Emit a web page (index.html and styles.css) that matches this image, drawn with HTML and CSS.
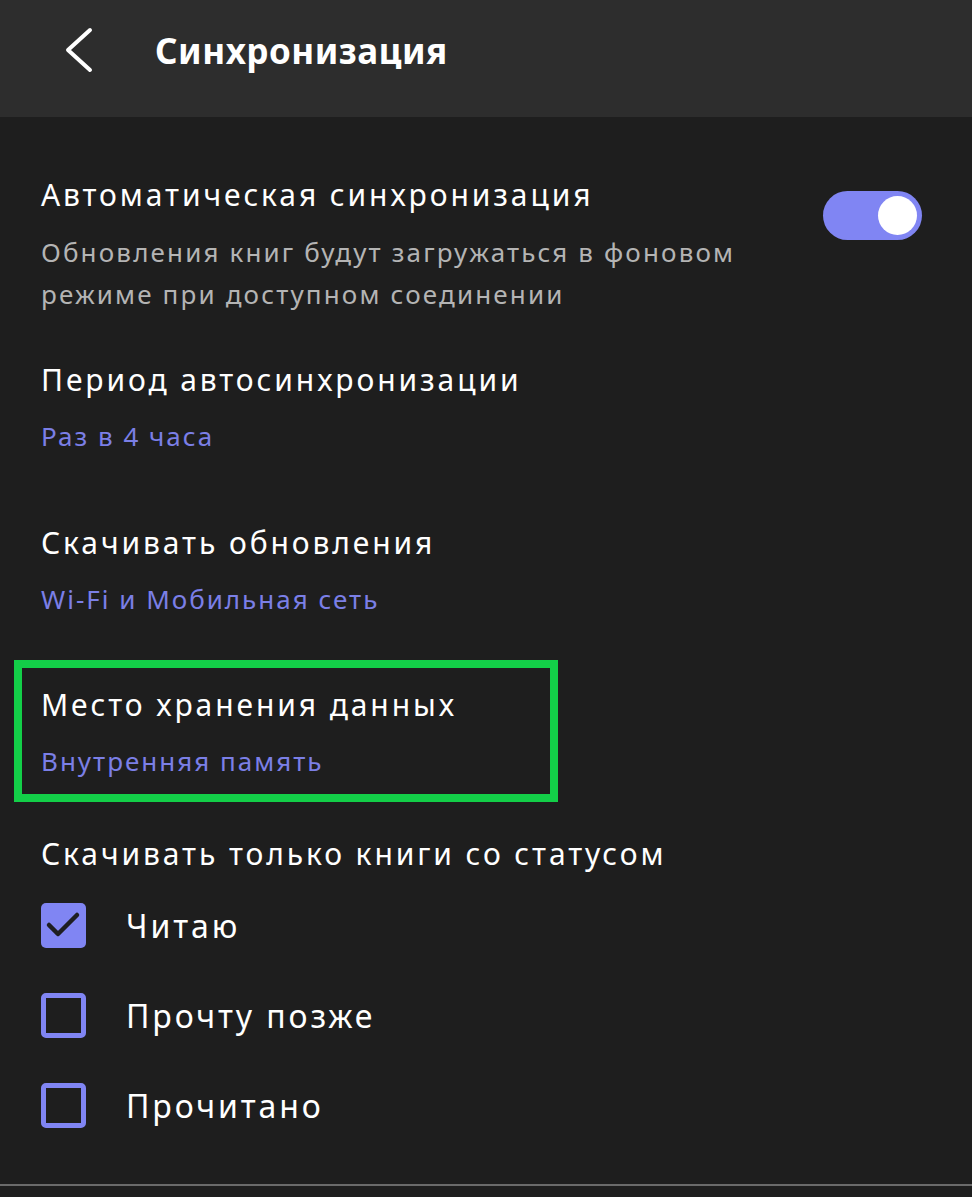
FILE: index.html
```html
<!DOCTYPE html>
<html lang="ru">
<head>
<meta charset="utf-8">
<title>Синхронизация</title>
<link rel="stylesheet" href="styles.css">
</head>
<body>
<header class="topbar">
  <button class="back" aria-label="Назад">
    <svg width="40" height="50" viewBox="0 0 40 50"><path d="M29 5 L7 25 L29 45" fill="none" stroke="#fff" stroke-width="4" stroke-linecap="round" stroke-linejoin="round"/></svg>
  </button>
  <h1 class="title">Синхронизация</h1>
</header>
<main class="content">
  <section class="item item-auto">
    <div class="item-text">
      <div class="item-title">Автоматическая синхронизация</div>
      <div class="item-desc">Обновления книг будут загружаться в фоновом режиме при доступном соединении</div>
    </div>
    <div class="toggle"><span class="knob"></span></div>
  </section>
  <section class="item item-period">
    <div class="item-title">Период автосинхронизации</div>
    <div class="item-value">Раз в 4 часа</div>
  </section>
  <section class="item item-download">
    <div class="item-title">Скачивать обновления</div>
    <div class="item-value">Wi-Fi и Мобильная сеть</div>
  </section>
  <section class="item item-storage">
    <div class="item-title">Место хранения данных</div>
    <div class="item-value">Внутренняя память</div>
  </section>
  <section class="item item-status">
    <div class="item-title">Скачивать только книги со статусом</div>
    <ul class="checks">
      <li class="check-row"><span class="box checked"><svg width="45" height="45" viewBox="0 0 45 45"><path d="M8 22 L17 31 L36 12" fill="none" stroke="#1e1e22" stroke-width="4.5" stroke-linecap="round" stroke-linejoin="round"/></svg></span><span class="check-label">Читаю</span></li>
      <li class="check-row"><span class="box"></span><span class="check-label">Прочту позже</span></li>
      <li class="check-row"><span class="box"></span><span class="check-label">Прочитано</span></li>
    </ul>
  </section>
</main>
<div class="bottom-line"></div>
</body>
</html>
```
FILE: styles.css
```css
* { box-sizing: border-box; }
html, body { margin: 0; padding: 0; }
body {
  width: 972px;
  height: 1197px;
  background: #1e1e1e;
  color: #ffffff;
  font-family: "Noto Sans", "DejaVu Sans", sans-serif;
  overflow: hidden;
}
.topbar {
  height: 117px;
  background: #2d2d2d;
  display: flex;
  align-items: center;
}
.back {
  background: none;
  border: 0;
  padding: 0;
  margin-left: 61px;
  width: 40px;
  height: 50px;
  display: flex;
  margin-top: -18px;
}
.title {
  margin: 0 0 0 54px;
  font-size: 35px;
  font-weight: bold;
  line-height: 44px;
  margin-top: -16px;
  letter-spacing: 0.5px;
}
.content {
  padding: 58px 0 0 0;
}
.item { padding-left: 41px; }
.item-title {
  font-size: 30px;
  line-height: 40px;
  letter-spacing: 2.9px;
}
.item-desc {
  margin-top: 16px;
  font-size: 26px;
  line-height: 42px;
  color: #b4b4b4;
  max-width: 740px;
  letter-spacing: 2.15px;
}
.item-value {
  margin-top: 15px;
  font-size: 26px;
  line-height: 42px;
  color: #7b7fe6;
  letter-spacing: 2px;
}
.item-auto {
  display: flex;
  justify-content: space-between;
  align-items: flex-start;
  padding-right: 50px;
  margin-bottom: 45px;
}
.toggle {
  margin-top: 16px;
  width: 99px;
  height: 49px;
  border-radius: 25px;
  background: #8085f3;
  display: flex;
  align-items: center;
  justify-content: flex-end;
  padding-right: 5px;
  flex-shrink: 0;
}
.knob {
  width: 39px;
  height: 39px;
  border-radius: 50%;
  background: #ffffff;
}
.item-period { margin-bottom: 66px; }
.item-download { margin-bottom: 40px; }
.item-storage {
  margin-left: 14px;
  width: 544px;
  border: 8px solid #13cf48;
  padding: 17px 0 12px 19px;
  margin-bottom: 32px;
}
.checks {
  list-style: none;
  margin: 29px 0 0 0;
  padding: 0;
  display: flex;
  flex-direction: column;
  gap: 45px;
}
.check-row {
  display: flex;
  align-items: center;
  height: 45px;
}
.box {
  width: 45px;
  height: 45px;
  border: 5px solid #8085f3;
  border-radius: 5px;
  flex-shrink: 0;
  display: flex;
  align-items: center;
  justify-content: center;
}
.box.checked {
  background: #8085f3;
  border: 0;
}
.check-label {
  margin-left: 40px;
  font-size: 32px;
  line-height: 45px;
  letter-spacing: 2.9px;
}
.bottom-line {
  position: absolute;
  left: 0;
  top: 1184px;
  width: 972px;
  height: 2px;
  background: #6a6a6a;
}
```
